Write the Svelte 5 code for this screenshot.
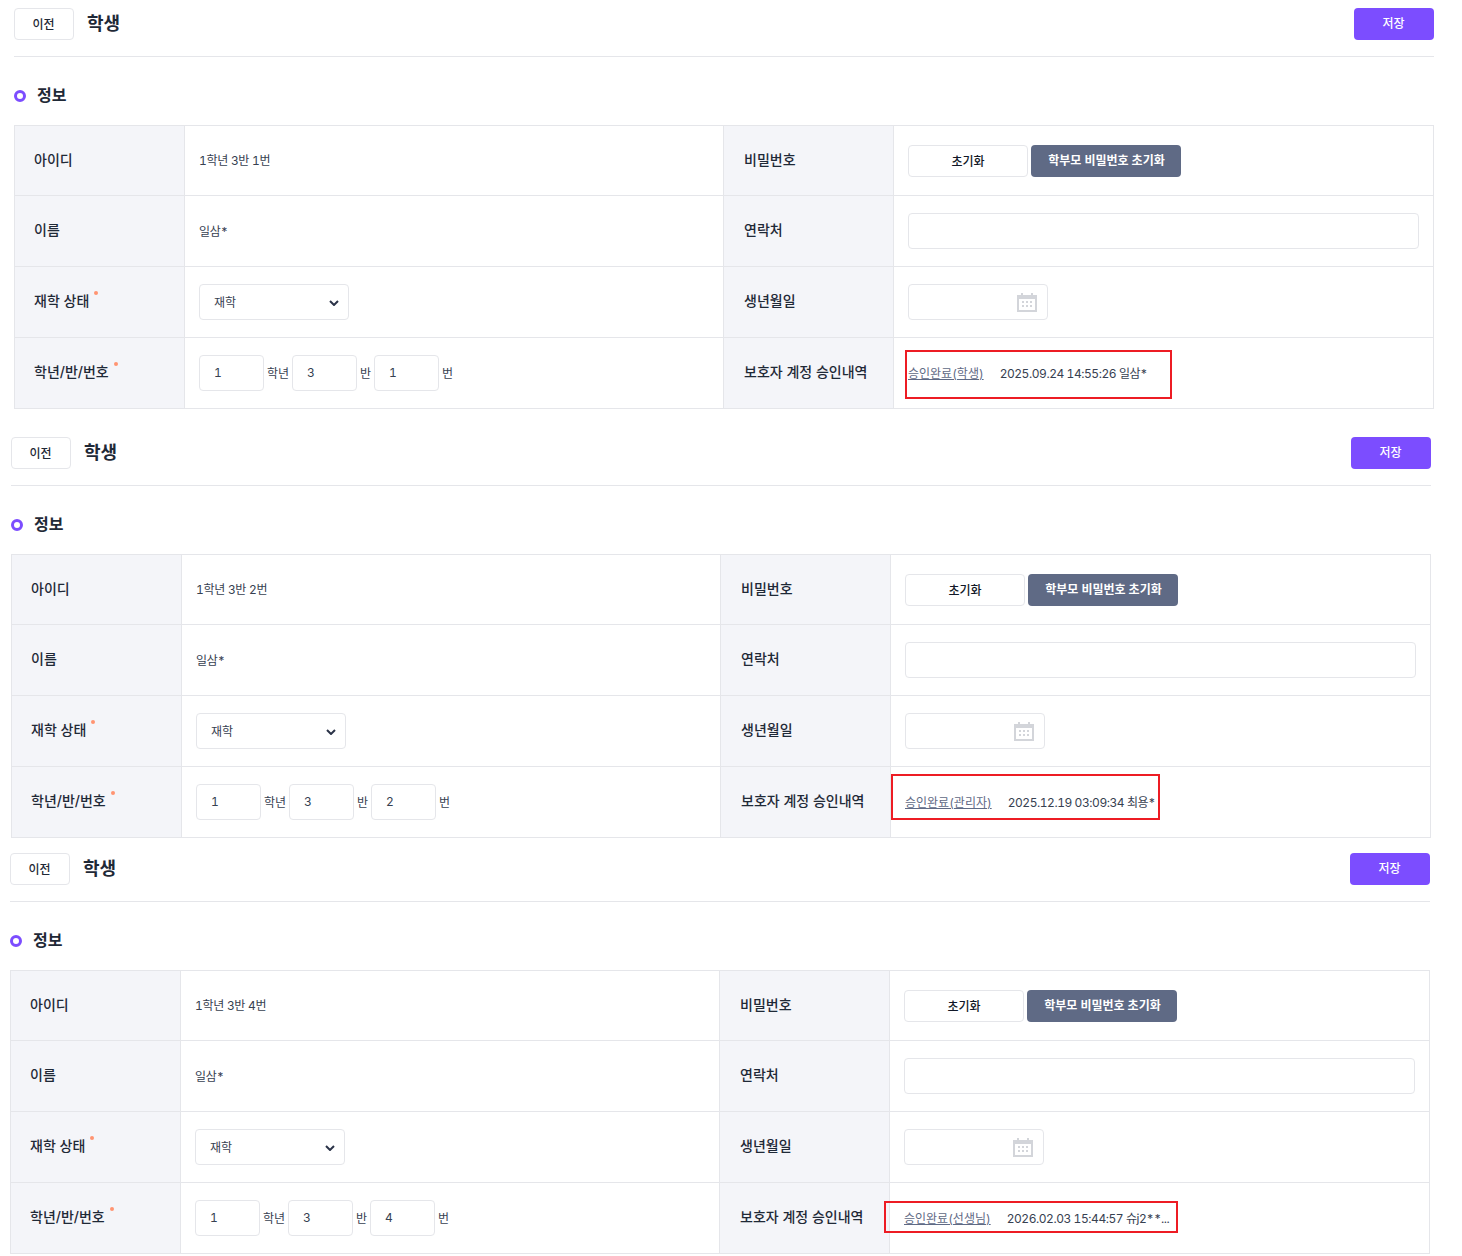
<script lang="ts">
  const panels = [
    { cls: 'first', id: '1학년 3반 1번', no: '1', link: '승인완료(학생)', log: '2025.09.24 14:55:26 일삼*' },
    { cls: 'second', id: '1학년 3반 2번', no: '2', link: '승인완료(관리자)', log: '2025.12.19 03:09:34 최용*' },
    { cls: 'third', id: '1학년 3반 4번', no: '4', link: '승인완료(선생님)', log: '2026.02.03 15:44:57 슈j2**...' }
  ];
</script>

<div class="page">
  {#each panels as p}
    <section class="panel {p.cls}">
      <header class="top">
        <div class="top-left">
          <button class="btn prev">이전</button>
          <h1>학생</h1>
        </div>
        <button class="btn save">저장</button>
      </header>

      <div class="section-title">
        <span class="ring"></span>
        <h2>정보</h2>
      </div>

      <div class="grid">
        <div class="th">아이디</div>
        <div class="td small">{p.id}</div>
        <div class="th right">비밀번호</div>
        <div class="td gap3">
          <button class="btn reset">초기화</button>
          <button class="btn parent">학부모 비밀번호 초기화</button>
        </div>

        <div class="th">이름</div>
        <div class="td small">일삼*</div>
        <div class="th right">연락처</div>
        <div class="td"><input class="field wide" type="text" /></div>

        <div class="th"><span>재학 상태</span><i class="req"></i></div>
        <div class="td">
          <div class="select-wrap">
            <select class="field status">
              <option>재학</option>
            </select>
            <svg class="chev" width="10" height="6" viewBox="0 0 10 6">
              <path d="M1 1l4 4 4-4" fill="none" stroke="#2b3348" stroke-width="2" />
            </svg>
          </div>
        </div>
        <div class="th right">생년월일</div>
        <div class="td">
          <div class="date">
            <input class="field birth" type="text" />
            <svg class="cal" width="20" height="20" viewBox="0 0 20 20">
              <path fill="#d3d5da" d="M4 1h2v2h8V1h2v2h4v17H0V3h4zM2 7v11h16V7z" />
              <path fill="#d3d5da" d="M5 9h2v2H5zM9 9h2v2H9zM13 9h2v2h-2zM5 13h2v2H5zM9 13h2v2H9zM13 13h2v2h-2z" />
            </svg>
          </div>
        </div>

        <div class="th"><span>학년/반/번호</span><i class="req"></i></div>
        <div class="td units">
          <input class="field unit" type="text" value="1" />
          <span class="u1">학년</span>
          <input class="field unit" type="text" value="3" />
          <span class="u2">반</span>
          <input class="field unit" type="text" value={p.no} />
          <span class="u3">번</span>
        </div>
        <div class="th right">보호자 계정 승인내역</div>
        <div class="td small history">
          <a href="#history">{p.link}</a>
          <span class="log">{p.log}</span>
          <span class="mark"></span>
        </div>
      </div>
    </section>
  {/each}
</div>

<style>
  :global(body) {
    margin: 0;
    background: #fff;
  }

  .page {
    width: 1462px;
    height: 1256px;
    overflow: hidden;
    padding-top: 8px;
    box-sizing: border-box;
    font-family: Inter, "Noto Sans CJK KR", sans-serif;
    font-variant-numeric: tabular-nums;
    color: #1f2937;
  }

  .panel {
    width: 1420px;
  }
  .first {
    margin-left: 14px;
  }
  .second {
    margin-left: 11px;
    margin-top: 28px;
  }
  .third {
    margin-left: 10px;
    margin-top: 15px;
  }

  .top {
    display: flex;
    justify-content: space-between;
    align-items: flex-start;
    height: 48px;
    border-bottom: 1px solid #e5e6ea;
  }

  .top-left {
    display: flex;
    align-items: center;
    gap: 13px;
  }

  h1 {
    margin: -1px 0 0;
    font-size: 18px;
    line-height: 26px;
    font-weight: 700;
    color: #1f2937;
  }

  .btn {
    box-sizing: border-box;
    height: 32px;
    padding: 0;
    border-radius: 4px;
    font-family: inherit;
    font-size: 12px;
    font-weight: 500;
    cursor: pointer;
  }

  .prev {
    width: 60px;
    padding: 0 1px 2px 0;
    background: #fff;
    border: 1px solid #e5e6ea;
    color: #1f2937;
  }

  .save {
    width: 80px;
    padding: 0 1px 3px 0;
    background: #7c4dff;
    border: none;
    color: #fff;
  }

  .reset {
    width: 120px;
    background: #fff;
    border: 1px solid #e5e6ea;
    color: #111827;
  }

  .parent {
    width: 150px;
    padding: 0 0 2px 1px;
    background: #5f6a85;
    border: none;
    color: #fff;
    font-weight: 600;
  }

  .section-title {
    display: flex;
    align-items: center;
    gap: 11px;
    height: 24px;
    margin: 26px 0 18px;
  }

  .ring {
    box-sizing: border-box;
    width: 12px;
    height: 12px;
    margin-top: 2px;
    border: 3px solid #7c4dff;
    border-radius: 50%;
  }

  h2 {
    margin: 0;
    font-size: 16px;
    line-height: 24px;
    font-weight: 700;
    color: #1f2937;
  }

  .grid {
    display: grid;
    grid-template-columns: 170px 539px 170px 540px;
    grid-template-rows: 70px 71px 71px 71px;
    border-top: 1px solid #e5e6ea;
    border-left: 1px solid #e5e6ea;
  }

  .th,
  .td {
    display: flex;
    align-items: center;
    border-right: 1px solid #e5e6ea;
    border-bottom: 1px solid #e5e6ea;
  }

  .th {
    padding: 0 0 4px 19px;
    background: #f4f5f9;
    font-size: 14px;
    font-weight: 500;
    color: #1f2937;
  }

  .th.right {
    padding-left: 20px;
  }

  .td {
    position: relative;
    padding: 0 14px;
  }

  .small {
    padding-bottom: 2px;
    font-size: 12px;
    letter-spacing: -0.3px;
    color: #374151;
  }

  .gap3 {
    gap: 3px;
  }

  .req {
    width: 4px;
    height: 4px;
    margin: -14px 0 0 5px;
    background: #ff9472;
    border-radius: 50%;
  }

  .field {
    box-sizing: border-box;
    height: 36px;
    background: #fff;
    border: 1px solid #e5e6ea;
    border-radius: 4px;
    font-family: inherit;
    font-variant-numeric: tabular-nums;
    font-size: 12px;
    color: #374151;
    outline: none;
  }

  .wide {
    width: 511px;
  }

  .select-wrap {
    position: relative;
    width: 150px;
    height: 36px;
  }

  .status {
    appearance: none;
    width: 150px;
    padding-left: 14px;
  }

  .chev {
    position: absolute;
    top: 16px;
    left: 130px;
    pointer-events: none;
  }

  .date {
    position: relative;
    width: 140px;
    height: 36px;
  }

  .birth {
    width: 140px;
  }

  .cal {
    position: absolute;
    top: 8px;
    right: 11px;
  }

  .unit {
    width: 65px;
    padding: 0 14px 2px;
  }

  .units {
    font-size: 12px;
    color: #374151;
  }

  .units span {
    margin-bottom: 2px;
  }

  .u1 {
    width: 28px;
    text-align: center;
  }

  .u2,
  .u3 {
    width: 17px;
    text-align: center;
  }

  .history a {
    letter-spacing: 0;
    color: #5f6a85;
    text-decoration: underline;
  }

  .log {
    margin-left: 16px;
    letter-spacing: -0.45px;
    color: #374151;
  }

  .mark {
    position: absolute;
    box-sizing: border-box;
    border: 2px solid #ed1c24;
    pointer-events: none;
  }

  .first .mark {
    left: 11px;
    top: 12px;
    width: 267px;
    height: 49px;
  }

  .second .mark {
    left: 0;
    top: 7px;
    width: 269px;
    height: 46px;
  }

  .third .mark {
    left: -6px;
    top: 18px;
    width: 294px;
    height: 32px;
  }
</style>
